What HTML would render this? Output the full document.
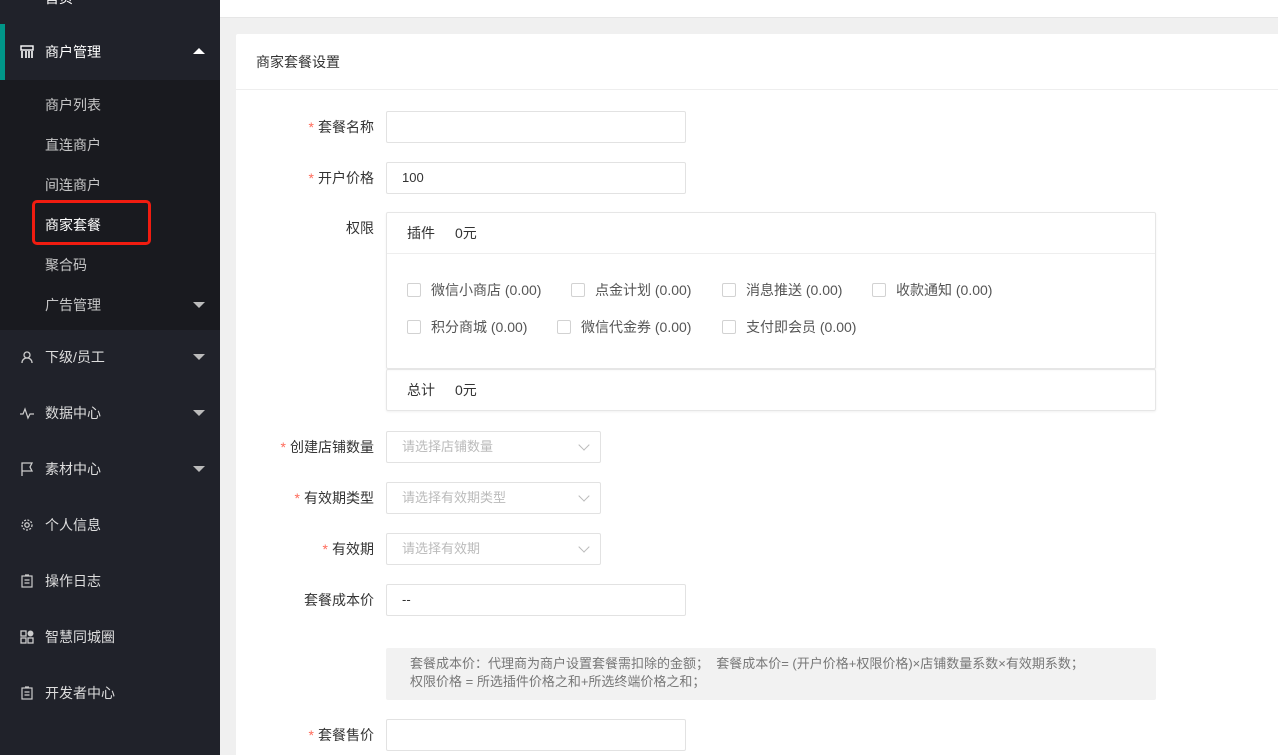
<!DOCTYPE html>
<html><head><meta charset="utf-8">
<style>
*{margin:0;padding:0;box-sizing:border-box}
html{width:1278px;height:755px;overflow:hidden}
body{width:1278px;height:755px;overflow:hidden;position:relative;background:#f0f0f0;font-family:"Liberation Sans","Noto Sans CJK SC",sans-serif;font-size:14px;color:#333}
.a{position:absolute}
#side{left:0;top:0;width:220px;height:755px;background:#20222a}
#sub{left:0;top:80px;width:220px;height:250px;background:#191a1f}
.mi{position:absolute;left:45px;color:#fff;font-size:14px;line-height:20px}
.si{position:absolute;left:45px;color:rgba(255,255,255,.75);font-size:14px;line-height:20px}
.ico{position:absolute;left:20px;width:14px;height:14px}
.tri{position:absolute;left:193px;width:0;height:0;border-left:6px solid transparent;border-right:6px solid transparent;border-top:6px solid #bbb}
.lbl{position:absolute;right:904px;font-size:14px;color:#333;line-height:20px;text-align:right;white-space:nowrap}
.lbl i{font-style:normal;color:#ff6a5a;margin-right:4px}
.inp{position:absolute;left:386px;width:300px;height:32px;border:1px solid #e2e2e2;border-radius:2px;background:#fff;padding-left:15px;line-height:30px;font-size:13px;color:#333}
.sel{width:215px;color:#bbb}
.sel:after{content:"";position:absolute;right:12px;top:9px;width:7px;height:7px;border-right:1px solid #bbb;border-bottom:1px solid #bbb;transform:rotate(45deg)}
.cb{position:absolute;width:14px;height:14px;border:1px solid #d2d2d2;border-radius:2px;background:#fff}
.ct{position:absolute;font-size:14px;color:#555;line-height:20px;white-space:nowrap}
</style></head><body>
<div class="a" style="left:220px;top:0;width:1058px;height:18px;background:#fff;border-bottom:1px solid #e6e6e6"></div>
<div class="a" id="side"></div>
<div class="a" id="sub"></div>
<div class="a" style="left:0;top:24px;width:220px;height:56px;background:#20222a"></div>
<div class="a" style="left:0;top:24px;width:5px;height:56px;background:#009688"></div>
<div class="mi" style="top:-12px">首页</div>
<svg class="ico" style="top:45px" viewBox="0 0 14 14"><rect x="1" y="1" width="12" height="4" fill="none" stroke="#fff" stroke-width="1.4"/><path d="M2 6v7M6 6v7M9 6v7M12 6v7" stroke="#fff" stroke-width="1.6"/></svg>
<div class="mi" style="top:42px">商户管理</div>
<div class="a" style="left:193px;top:48px;border-left:6px solid transparent;border-right:6px solid transparent;border-bottom:6px solid #fff"></div>
<div class="si" style="top:95px">商户列表</div>
<div class="si" style="top:135px">直连商户</div>
<div class="si" style="top:175px">间连商户</div>
<div class="a" style="left:32px;top:200px;width:119px;height:45px;border:3px solid #f01c10;border-radius:5px"></div>
<div class="si" style="top:215px;color:#fff">商家套餐</div>
<div class="si" style="top:255px">聚合码</div>
<div class="si" style="top:295px">广告管理</div>
<div class="tri" style="top:302px"></div>

<svg class="ico" style="top:350px" viewBox="0 0 14 14" fill="none" stroke="#ccc" stroke-width="1.3"><circle cx="7" cy="5" r="3"/><path d="M2 13c0-3 2-5 5-5s5 2 5 5"/></svg>
<div class="mi" style="top:347px;color:#ddd">下级/员工</div><div class="tri" style="top:354px"></div>
<svg class="ico" style="top:406px" viewBox="0 0 14 14" fill="none" stroke="#ccc" stroke-width="1.2"><path d="M0 8h3l2-5 3 9 2-4h4"/></svg>
<div class="mi" style="top:403px;color:#ddd">数据中心</div><div class="tri" style="top:410px"></div>
<svg class="ico" style="top:462px" viewBox="0 0 14 14" fill="none" stroke="#ccc" stroke-width="1.3"><path d="M2 14V1h10l-2 4 2 4H2"/></svg>
<div class="mi" style="top:459px;color:#ddd">素材中心</div><div class="tri" style="top:466px"></div>
<svg class="ico" style="top:518px" viewBox="0 0 14 14" fill="none" stroke="#ccc" stroke-width="1.3"><circle cx="7" cy="7" r="2.2"/><circle cx="7" cy="7" r="5" stroke-dasharray="2 1.4"/></svg>
<div class="mi" style="top:515px;color:#ddd">个人信息</div>
<svg class="ico" style="top:574px" viewBox="0 0 14 14" fill="none" stroke="#ccc" stroke-width="1.2"><rect x="2" y="2" width="10" height="11"/><path d="M5 1h4M4.5 6h5M4.5 9h5"/></svg>
<div class="mi" style="top:571px;color:#ddd">操作日志</div>
<svg class="ico" style="top:630px" viewBox="0 0 14 14" fill="none" stroke="#ccc" stroke-width="1.3"><rect x="1" y="1" width="5" height="5"/><rect x="1" y="8" width="5" height="5"/><rect x="8" y="8" width="5" height="5"/><circle cx="10.5" cy="3.5" r="2.3" fill="#ccc"/></svg>
<div class="mi" style="top:627px;color:#ddd">智慧同城圈</div>
<svg class="ico" style="top:686px" viewBox="0 0 14 14" fill="none" stroke="#ccc" stroke-width="1.2"><rect x="2" y="2" width="10" height="11"/><path d="M5 1h4M4.5 6h5M4.5 9h5"/></svg>
<div class="mi" style="top:683px;color:#ddd">开发者中心</div>

<div class="a" style="left:236px;top:34px;width:1042px;height:721px;background:#fff;border-radius:2px 0 0 0"></div>
<div class="a" style="left:236px;top:89px;width:1042px;height:1px;background:#eee"></div>
<div class="a" style="left:256px;top:52px;font-size:14px;color:#333;line-height:20px">商家套餐设置</div>

<div class="lbl" style="top:117px"><i>*</i>套餐名称</div>
<div class="inp" style="top:111px"></div>
<div class="lbl" style="top:168px"><i>*</i>开户价格</div>
<div class="inp" style="top:162px">100</div>
<div class="lbl" style="top:218px">权限</div>

<div class="a" style="left:386px;top:212px;width:770px;height:157px;border:1px solid #e6e6e6;border-radius:2px;box-shadow:0 1px 2px rgba(0,0,0,.05)"></div>
<div class="a" style="left:387px;top:253px;width:768px;height:1px;background:#eee"></div>
<div class="ct" style="left:407px;top:223px;color:#333">插件</div>
<div class="ct" style="left:455px;top:223px;color:#333">0元</div>

<div class="cb" style="left:407px;top:283px"></div><div class="ct" style="left:431px;top:280px">微信小商店 (0.00)</div>
<div class="cb" style="left:571px;top:283px"></div><div class="ct" style="left:595px;top:280px">点金计划 (0.00)</div>
<div class="cb" style="left:722px;top:283px"></div><div class="ct" style="left:746px;top:280px">消息推送 (0.00)</div>
<div class="cb" style="left:872px;top:283px"></div><div class="ct" style="left:896px;top:280px">收款通知 (0.00)</div>
<div class="cb" style="left:407px;top:320px"></div><div class="ct" style="left:431px;top:317px">积分商城 (0.00)</div>
<div class="cb" style="left:557px;top:320px"></div><div class="ct" style="left:581px;top:317px">微信代金券 (0.00)</div>
<div class="cb" style="left:722px;top:320px"></div><div class="ct" style="left:746px;top:317px">支付即会员 (0.00)</div>

<div class="a" style="left:386px;top:369px;width:770px;height:42px;border:1px solid #e6e6e6;border-radius:2px;box-shadow:0 1px 2px rgba(0,0,0,.06)"></div>
<div class="ct" style="left:407px;top:380px;color:#333">总计</div>
<div class="ct" style="left:455px;top:380px;color:#333">0元</div>

<div class="lbl" style="top:437px"><i>*</i>创建店铺数量</div>
<div class="inp sel" style="top:431px">请选择店铺数量</div>
<div class="lbl" style="top:488px"><i>*</i>有效期类型</div>
<div class="inp sel" style="top:482px">请选择有效期类型</div>
<div class="lbl" style="top:539px"><i>*</i>有效期</div>
<div class="inp sel" style="top:533px">请选择有效期</div>
<div class="lbl" style="top:590px">套餐成本价</div>
<div class="inp" style="top:584px">--</div>

<div class="a" style="left:386px;top:648px;width:770px;height:52px;background:#f2f2f2;border-radius:2px;padding:7px 0 0 24px;font-size:13px;color:#777;line-height:18px">套餐成本价：代理商为商户设置套餐需扣除的金额； &nbsp;套餐成本价= (开户价格+权限价格)×店铺数量系数×有效期系数；<br>权限价格 = 所选插件价格之和+所选终端价格之和；</div>

<div class="lbl" style="top:725px"><i>*</i>套餐售价</div>
<div class="inp" style="top:719px"></div>
</body></html>
